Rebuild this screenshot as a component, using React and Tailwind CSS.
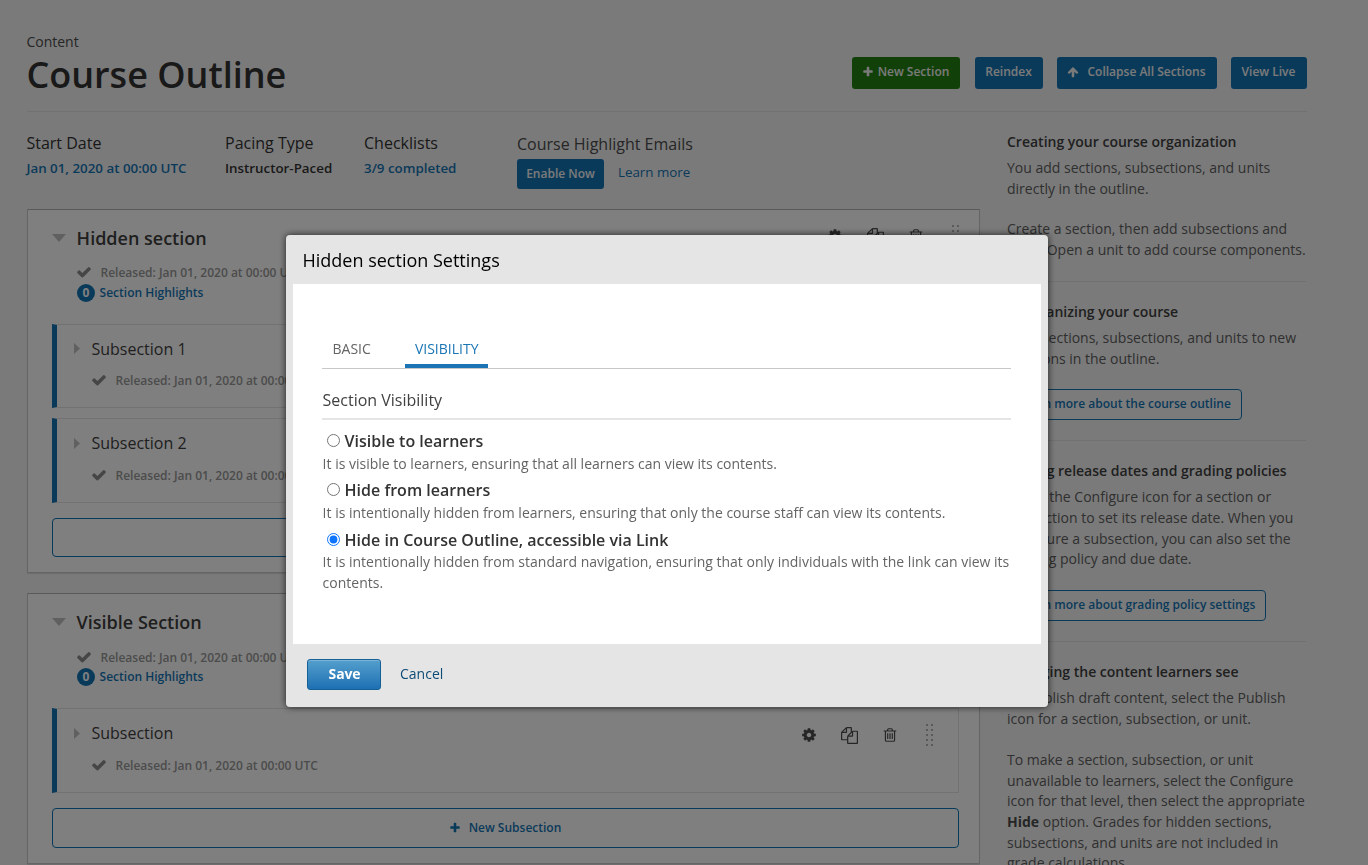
import React from "react";

const PATHS = {
  cog: "M1152 896q0-106-75-181t-181-75-181 75-75 181 75 181 181 75 181-75 75-181zm512-109v222q0 12-8 23t-20 13l-185 28q-19 54-39 91 35 50 107 138 10 12 10 25t-9 23q-27 37-99 108t-94 71q-12 0-26-9l-138-108q-44 23-91 38-16 136-29 186-7 28-36 28h-222q-14 0-24.5-8.5t-11.5-21.5l-28-184q-49-16-90-37l-141 107q-10 9-25 9-14 0-25-11-126-114-165-168-7-10-7-23 0-12 8-23 15-21 51-66.5t54-70.5q-27-50-41-99l-183-27q-13-2-21-12.5t-8-23.5v-222q0-12 8-23t19-13l186-28q14-46 39-92-40-57-107-138-10-12-10-24 0-10 9-23 26-36 98.5-107.5t94.5-71.5q13 0 26 10l138 107q44-23 91-38 16-136 29-186 7-28 36-28h222q14 0 24.5 8.5t11.5 21.5l28 184q49 16 90 37l142-107q9-9 24-9 13 0 25 10 129 119 165 170 7 8 7 22 0 12-8 23-15 21-51 66.5t-54 70.5q26 50 41 98l183 28q13 2 21 12.5t8 23.5z",
  copy: "M1696 384q40 0 68 28t28 68v1216q0 40-28 68t-68 28h-960q-40 0-68-28t-28-68v-288h-544q-40 0-68-28t-28-68v-672q0-40 20-88t48-76l408-408q28-28 76-48t88-20h416q40 0 68 28t28 68v328q68-40 128-40h416zm-544 213l-299 299h299v-299zm-640-384l-299 299h299v-299zm196 647l316-316v-416h-384v416q0 40-28 68t-68 28h-416v640h512v-256q0-40 20-88t48-76zm956 804v-1152h-384v416q0 40-28 68t-68 28h-416v640h896z",
  trash: "M704 736v576q0 14-9 23t-23 9h-64q-14 0-23-9t-9-23v-576q0-14 9-23t23-9h64q14 0 23 9t9 23zm256 0v576q0 14-9 23t-23 9h-64q-14 0-23-9t-9-23v-576q0-14 9-23t23-9h64q14 0 23 9t9 23zm256 0v576q0 14-9 23t-23 9h-64q-14 0-23-9t-9-23v-576q0-14 9-23t23-9h64q14 0 23 9t9 23zm128 724v-948h-896v948q0 22 7 40.5t14.5 27 10.5 8.5h832q3 0 10.5-8.5t14.5-27 7-40.5zm-672-1076h448l-48-117q-7-9-17-11h-317q-10 2-17 11zm928 32v64q0 14-9 23t-23 9h-96v948q0 83-47 143.5t-113 60.5h-832q-66 0-113-58.5t-47-141.5v-952h-96q-14 0-23-9t-9-23v-64q0-14 9-23t23-9h309l70-167q15-37 54-63t79-26h320q40 0 79 26t54 63l70 167h309q14 0 23 9t9 23z",
  check: "M1671 566q0 40-28 68l-724 724-136 136q-28 28-68 28t-68-28l-136-136-362-362q-28-28-28-68t28-68l136-136q28-28 68-28t68 28l294 295 656-657q28-28 68-28t68 28l136 136q28 28 28 68z",
  plus: "M1600 736v192q0 40-28 68t-68 28h-416v416q0 40-28 68t-68 28h-192q-40 0-68-28t-28-68v-416h-416q-40 0-68-28t-28-68v-192q0-40 28-68t68-28h416v-416q0-40 28-68t68-28h192q40 0 68 28t28 68v416h416q40 0 68 28t28 68z",
  up: "M1675 971q0 51-37 90l-75 75q-38 38-91 38-54 0-90-38l-294-293v704q0 52-37.5 84.5t-90.5 32.5h-128q-53 0-90.5-32.5t-37.5-84.5v-704l-294 293q-36 38-90 38t-90-38l-75-75q-38-38-38-90 0-53 38-91l651-651q35-37 90-37 54 0 91 37l651 651q37 39 37 91z",
};

function Icon({ name, className }) {
  return (
    <svg viewBox="0 0 1792 1792" fill="currentColor" className={className} aria-hidden="true">
      <path d={PATHS[name]} />
    </svg>
  );
}

function DragHandle() {
  const rows = [0, 5, 10, 15, 20];
  return (
    <svg viewBox="0 0 7 22" className="h-[22px] w-[7px] text-[#b5b5b5]" fill="currentColor" aria-hidden="true">
      {rows.map((y) => (
        <g key={y}>
          <rect x="0" y={y} width="2" height="2" />
          <rect x="5" y={y} width="2" height="2" />
        </g>
      ))}
    </svg>
  );
}

function Actions() {
  return (
    <div className="flex h-[22px] items-center text-[#4c4c4c]">
      <Icon name="cog" className="mr-[24px] size-4" />
      <Icon name="copy" className="mr-[24px] size-[17px]" />
      <Icon name="trash" className="mr-[28px] size-4" />
      <DragHandle />
    </div>
  );
}

function Released({ className }) {
  return (
    <div className={`flex h-[18px] items-center text-[12px] leading-[18px] font-semibold whitespace-nowrap text-[#989898] ${className}`}>
      <Icon name="check" className="mr-[8.2px] mb-[2px] size-4 text-[#8c8c8c]" />
      Released: Jan 01, 2020 at 00:00 UTC
    </div>
  );
}

function Subsection({ title }) {
  return (
    <div className="flex h-[84.3px] items-start justify-between border border-l-[5px] border-[#e5e5e5] border-l-[#1575b5] pr-[25px]">
      <div>
        <div className="mt-[12px] flex h-[24px] items-center pl-[17px] text-[16px] leading-6 text-[#3f3f3f]">
          <svg viewBox="0 0 6 11" className="mr-[11.4px] h-[11px] w-[6px] fill-[#c0c0c0]">
            <path d="M0 0L6 5.5L0 11Z" />
          </svg>
          {title}
        </div>
        <Released className="mt-[11.4px] pl-[34.3px]" />
      </div>
      <div className="mt-[15px]">
        <Actions />
      </div>
    </div>
  );
}

function Section({ title, subsections }) {
  return (
    <section className="mb-5 rounded-[1px] border border-[#cbcbcb] border-t-[#b2b2b2] bg-white pr-5 pb-[15px] pl-6 text-[#3f3f3f] shadow-[0_1px_1px_#d9d9d9]">
      <div className="flex h-[54.4px] items-start justify-between pt-[15px]">
        <h2 className="flex items-center text-[18px] leading-[27px] font-semibold">
          <svg viewBox="0 0 14 8" className="mr-[11px] mb-px -ml-[0.4px] h-[8px] w-[14px] fill-[#c0c0c0]">
            <path d="M0 0H14L7 8Z" />
          </svg>
          {title}
        </h2>
        <Actions />
      </div>
      <Released className="pl-[24.3px]" />
      <div className="mt-px mb-[21.6px] flex h-[19px] items-center pl-[25px] text-[12px] font-semibold text-[#1575b5]">
        <span className="mr-[4.6px] flex size-[18px] items-center justify-center rounded-full bg-[#1575b5] leading-none font-bold text-white">0</span>
        Section Highlights
      </div>
      <div className="flex flex-col gap-[10px]">
        {subsections.map((s) => (
          <Subsection key={s} title={s} />
        ))}
      </div>
      <button className="mt-[15.4px] flex h-[39.47px] w-full items-center justify-center rounded border border-[#0d75b5] pr-px text-[12px] font-semibold text-[#1575b5]">
        <Icon name="plus" className="mr-[8px] size-3" />
        New Subsection
      </button>
    </section>
  );
}

function HelpBlock({ title, paragraphs, link, last }) {
  return (
    <div className={last ? "" : "mb-5 border-b border-[#e3e3e3] pb-[20.25px]"}>
      <h3 className={`text-[14px] leading-5 font-semibold text-[#3f3f3f] ${last ? "mb-[6.5px]" : "mb-[6px]"}`}>{title}</h3>
      <div className="flex flex-col gap-5 text-[14px] leading-[20.72px] whitespace-nowrap text-[#606060]">
        {paragraphs.map((lines, i) => (
          <p key={i}>
            {lines.map((line, j) => (
              <React.Fragment key={j}>
                {line}
                <br />
              </React.Fragment>
            ))}
          </p>
        ))}
      </div>
      {link && (
        <a className="mt-[19.7px] flex h-[30.8px] w-fit items-start rounded border border-[#1575b5] bg-white/20 px-[10px] pt-[5px] text-[12px] leading-[18px] font-semibold whitespace-nowrap text-[#1575b5]">
          {link}
        </a>
      )}
    </div>
  );
}

function Choice({ label, checked, children }) {
  return (
    <div className="mb-[4px]">
      <label className="flex h-[24.8px] items-center pl-[5px] text-[16px] leading-[24.8px] font-semibold text-[#333]">
        <input type="radio" name="visibility" defaultChecked={checked} className="mr-[4.6px] mb-[2px] size-[13px] accent-[#0d75ff]" />
        {label}
      </label>
      <p className="pl-[0.6px] text-[14px] leading-[20.6px] text-[#646464]">{children}</p>
    </div>
  );
}

function Modal() {
  return (
    <div className="fixed inset-0 flex items-start bg-black/50 pt-[235px] pl-[286px]">
      <div role="dialog" className="flex h-[472px] w-[762px] flex-col rounded bg-[#e5e5e5] px-[7px] shadow-[0_0_7px_rgba(0,0,0,0.75)]">
        <h2 className="h-[49px] pl-[9.5px] text-[18px] leading-[51px] text-black">Hidden section Settings</h2>
        <div className="h-[360px] w-[748px] bg-white pt-[53px] pr-[30px] pl-[29px]">
          <div className="flex h-[32px] border-b border-[#c8c8c8] text-[14px] leading-6 text-[#646464]">
            <div className="mr-[24px] h-[31px] px-[10.5px]">BASIC</div>
            <div className="h-[31px] w-[83px] border-b-4 border-[#1b75b5] pl-[9.6px] text-[#1b75b5]">VISIBILITY</div>
          </div>
          <h3 className="mt-[19px] mb-[8.85px] h-[32px] border-b-2 border-[#e5e5e5] pl-[0.5px] text-[16px] leading-6 text-[#414141]">Section Visibility</h3>
          <Choice label="Visible to learners">It is visible to learners, ensuring that all learners can view its contents.</Choice>
          <Choice label="Hide from learners">It is intentionally hidden from learners, ensuring that only the course staff can view its contents.</Choice>
          <Choice label="Hide in Course Outline, accessible via Link" checked>
            It is intentionally hidden from standard navigation, ensuring that only individuals with the link can view its contents.
          </Choice>
        </div>
        <div className="flex items-center pt-[15px] pl-[14px] text-[14px]">
          <button className="mr-[19px] h-[31px] w-[74px] rounded-[3px] border border-[#156096] bg-gradient-to-b from-[#539fcd] to-[#1c70b3] pb-[2px] pl-px font-bold tracking-[-0.15px] text-white shadow-[inset_0_1px_0_#7ab4d8]">Save</button>
          <button className="pb-[2px] text-[#0e4b75]">Cancel</button>
        </div>
      </div>
    </div>
  );
}

export default function App() {
  return (
    <div className="h-[865px] overflow-hidden bg-[#f5f5f5] pl-[27px] font-['Open_Sans',sans-serif]">
      <div className="w-[1280px]">
        <header className="flex h-[112px] justify-between border-b border-[#e3e3e3]">
          <div className="-ml-[0.6px] pt-[32px]">
            <div className="h-5 text-[14px] leading-5 text-[#4c4c4c]">Content</div>
            <h1 className="text-[36px] leading-[46px] font-semibold whitespace-nowrap text-[#333]">Course Outline</h1>
          </div>
          <div className="flex pt-[57px] text-[12px] leading-[18px] font-semibold whitespace-nowrap text-[#f5f5f5]">
            <button className="mr-[15px] flex h-8 w-[108px] justify-center rounded-[3px] bg-[#238210] pt-[6px] pr-px">
              <Icon name="plus" className="mt-[3px] mr-1 size-3" />
              New Section
            </button>
            <button className="mr-[14px] flex h-8 w-[68px] justify-center rounded-[3px] bg-[#1575b5] pt-[6px] pr-px">Reindex</button>
            <button className="mr-[14px] flex h-8 w-[160px] justify-center rounded-[3px] bg-[#1575b5] pt-[6px] pr-px">
              <Icon name="up" className="mt-[3px] mr-2 size-3" />
              Collapse All Sections
            </button>
            <button className="flex h-8 w-[76px] justify-center rounded-[3px] bg-[#1575b5] pt-[6px] pr-px">View Live</button>
          </div>
        </header>
        <div className="flex">
          <main className="mr-[27px] w-[953px] shrink-0">
            <div className="flex h-[97px] pt-[19px] text-[13.35px] leading-5 font-semibold whitespace-nowrap text-[#333]">
              <div className="-ml-[0.6px] w-[198.6px]">
                <h4 className="mb-[3px] text-[16px] leading-6 font-normal">Start Date</h4>
                <p className="text-[#1575b5]">Jan 01, 2020 at 00:00 UTC</p>
              </div>
              <div className="w-[139px]">
                <h4 className="mb-[3px] text-[16px] leading-6 font-normal">Pacing Type</h4>
                <p>Instructor-Paced</p>
              </div>
              <div className="w-[153px]">
                <h4 className="mb-[3px] text-[16px] leading-6 font-normal">Checklists</h4>
                <p className="text-[#1575b5]">3/9 completed</p>
              </div>
              <div>
                <h4 className="mt-px mb-[3px] text-[16px] leading-6 font-normal text-[#4c4c4c]">Course Highlight Emails</h4>
                <div className="flex">
                  <button className="mr-[14px] h-[30px] w-[87px] rounded-[3px] bg-[#1575b5] text-[12px] text-[#f5f5f5]">Enable Now</button>
                  <a className="pt-[3px] font-normal text-[#1575b5]">Learn more</a>
                </div>
              </div>
            </div>
            <Section title="Hidden section" subsections={["Subsection 1", "Subsection 2"]} />
            <Section title="Visible Section" subsections={["Subsection"]} />
          </main>
          <aside className="w-[299px] shrink-0 pt-[20px]">
            <HelpBlock
              title="Creating your course organization"
              paragraphs={[
                ["You add sections, subsections, and units", "directly in the outline."],
                ["Create a section, then add subsections and", "units. Open a unit to add course components."],
              ]}
            />
            <HelpBlock
              title="Reorganizing your course"
              paragraphs={[["Drag sections, subsections, and units to new", "locations in the outline."]]}
              link="Learn more about the course outline"
            />
            <HelpBlock
              title="Setting release dates and grading policies"
              paragraphs={[["Select the Configure icon for a section or", "subsection to set its release date. When you", "configure a subsection, you can also set the", "grading policy and due date."]]}
              link="Learn more about grading policy settings"
            />
            <HelpBlock
              last
              title="Changing the content learners see"
              paragraphs={[
                ["To publish draft content, select the Publish", "icon for a section, subsection, or unit."],
                [
                  "To make a section, subsection, or unit",
                  "unavailable to learners, select the Configure",
                  "icon for that level, then select the appropriate",
                  <>
                    <b className="font-bold text-[#4c4c4c]">Hide</b> option. Grades for hidden sections,
                  </>,
                  "subsections, and units are not included in",
                  "grade calculations.",
                ],
              ]}
            />
          </aside>
        </div>
      </div>
      <Modal />
    </div>
  );
}
